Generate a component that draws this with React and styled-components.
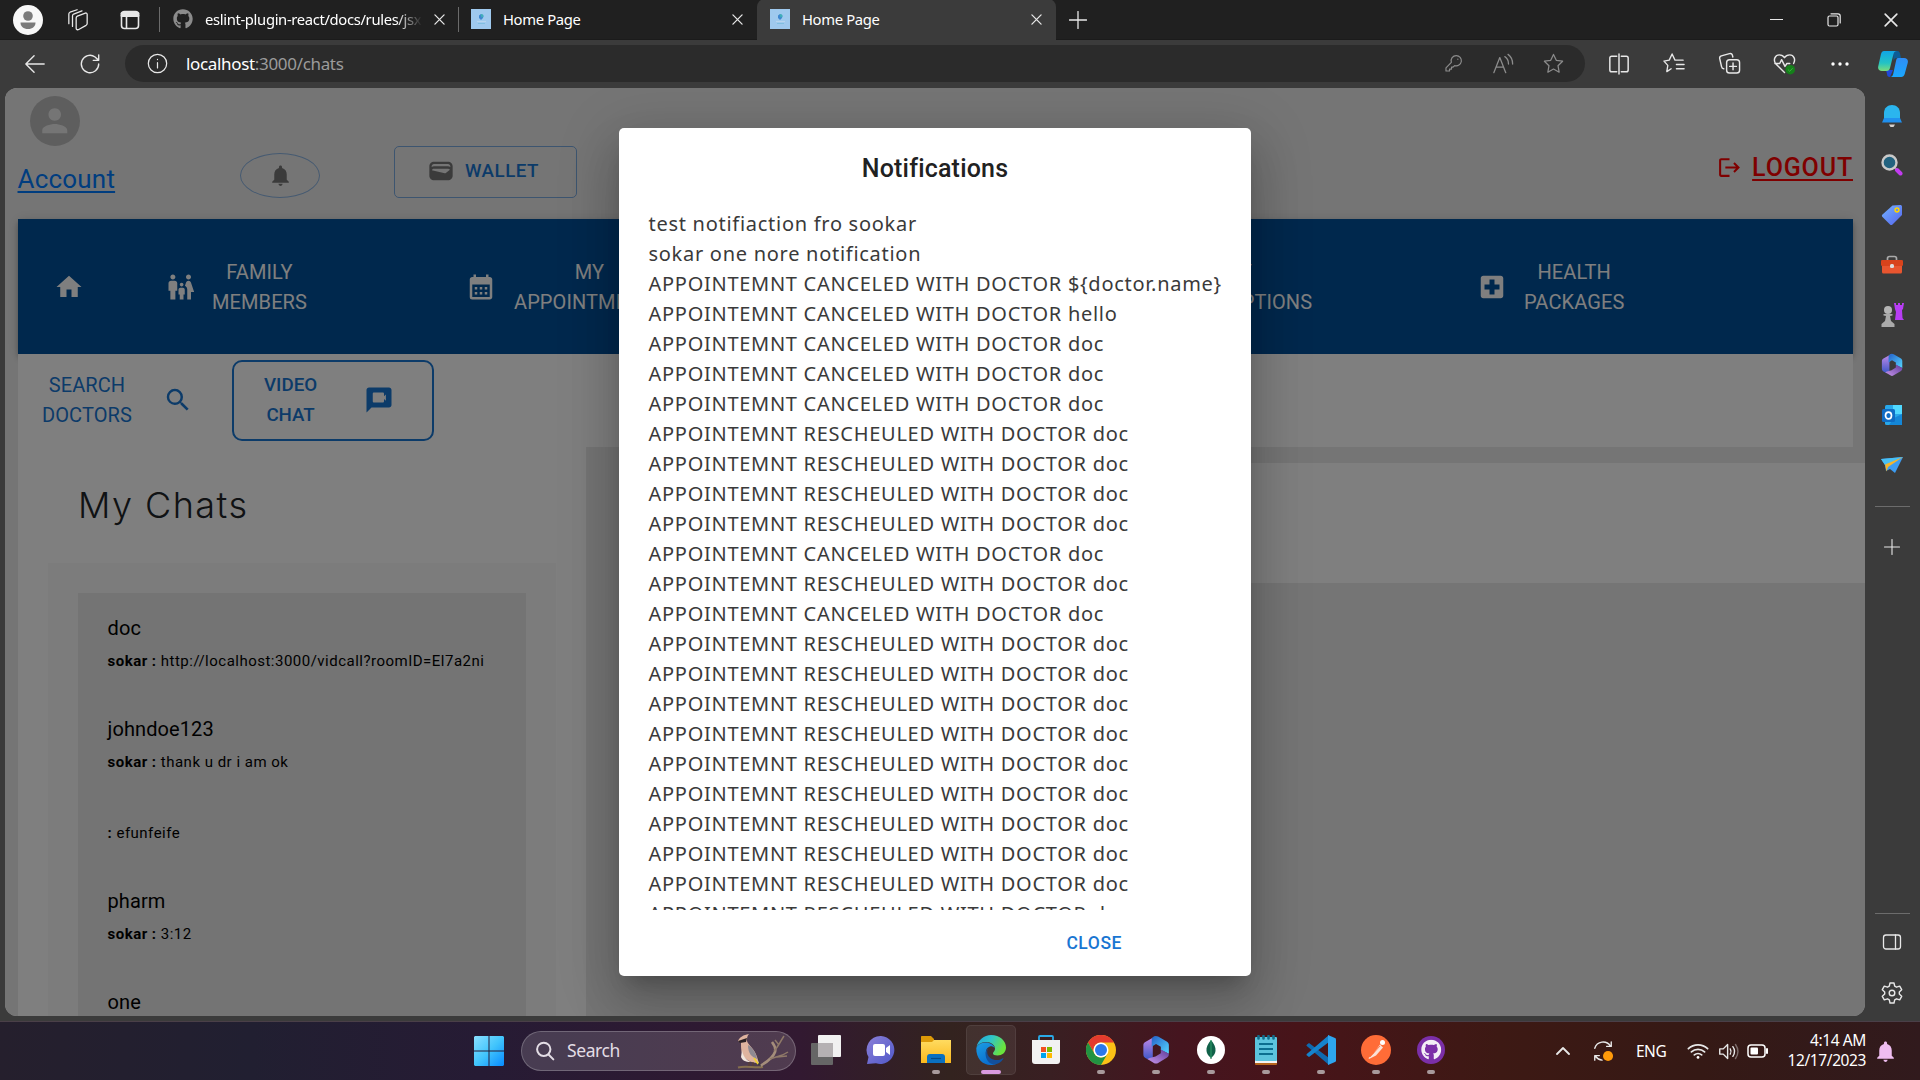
import React from "react";
import styled, { createGlobalStyle } from "styled-components";
import {
  MdPerson, MdNotifications, MdHome, MdFamilyRestroom, MdCalendarMonth,
  MdLocalHospital, MdSearch, MdLogout,
} from "react-icons/md";
import { FaGithub } from "react-icons/fa";

const ui = `"Segoe UI", "Noto Sans", "Open Sans", sans-serif`;
const roboto = `Roboto, "Liberation Sans", sans-serif`;

const Global = createGlobalStyle`
  * { box-sizing: border-box; }
  body { margin: 0; background: #3b3b3b; overflow: hidden; }
  svg { display: block; flex: none; }
`;

const Screen = styled.div`
  width: 1920px; height: 1080px; display: flex; flex-direction: column;
  background: #3b3b3b; overflow: hidden; font-family: ${ui};
`;

/* ---------- browser frame ---------- */
const TabStrip = styled.div`
  height: 40px; flex: none; display: flex; align-items: center; background: #202020; color: #fff;
  border-bottom: 1px solid #1b1b1b;
`;
const Slot = styled.div`
  width: ${(p) => p.$w}px; height: ${(p) => p.$h || 40}px; flex: none;
  display: flex; align-items: center; justify-content: center; color: ${(p) => p.$c || "#e8e8e8"};
`;
const Profile = styled.div`
  width: 30px; height: 30px; border-radius: 50%; background: #f8f8f8; display: flex;
  align-items: center; justify-content: center; margin-left: 13px;
`;
const Tab = styled.div`
  width: ${(p) => p.$w}px; height: 41px; display: flex; align-items: center; flex: none;
  padding: 0 8px 1px ${(p) => p.$pad || 13}px; background: ${(p) => (p.$active ? "#3b3b3b" : "transparent")};
  border-radius: 8px 8px 0 0;
`;
const Divider = styled.div`width: 1px; height: 25px; background: #6b6b6b; flex: none;`;
const TabTitle = styled.div`
  flex: 1; min-width: 0; overflow: hidden; white-space: nowrap; font-size: 14.8px; line-height: 22px;
  letter-spacing: -0.35px; margin: -1px 0 0 12px; color: #fff;
  ${(p) => p.$fade && "mask-image: linear-gradient(90deg, #000 88%, transparent 100%);"}
`;
const Spacer = styled.div`flex: 1;`;

const Toolbar = styled.div`height: 48px; flex: none; display: flex; align-items: center; padding-left: 12px; padding-bottom: 1px;`;
const Address = styled.div`
  width: 1460px; height: 37px; border-radius: 19px; background: #2b2b2b; display: flex; align-items: center;
  margin-left: 3px; padding: 0 7px;
`;
const Url = styled.div`
  flex: 1; font-size: 17px; line-height: 24px; color: #9b9b9b; letter-spacing: -0.33px; padding-left: 4px;
  b { font-weight: 400; color: #fff; }
`;

const Body = styled.div`flex: 1; display: flex; min-height: 0; padding: 0 0 5px 5px;`;
const Rail = styled.div`width: 54px; display: flex; flex-direction: column; align-items: center; padding-top: 3px;`;
const RailLine = styled.div`width: 35px; height: 1px; background: #6c6c6c;`;

/* ---------- web page ---------- */
const Viewport = styled.div`
  width: 1860px; height: 928px; flex: none; border-radius: 12px; overflow: hidden; background: #ebebeb;
  position: relative; font-family: ${roboto};
`;
const Header = styled.header`height: 131px; display: flex; padding: 8px 12px 0 13px;`;
const AccountBox = styled.div`width: 222px;`;
const Avatar = styled.div`
  width: 50px; height: 50px; border-radius: 50%; background: #bdbdbd; color: #ebebeb; margin-left: 12px;
  display: flex; align-items: center; justify-content: center;
`;
const AccountLink = styled.a`
  display: block; margin-top: 15px; font-size: 26px; line-height: 36px; color: #007bff; text-decoration: underline;
  text-decoration-thickness: 2px; text-underline-offset: 3px; letter-spacing: 0.2px; text-indent: -0.5px;
`;
const BellButton = styled.button`
  width: 80px; height: 45px; margin: 57px 74px 0 0; padding: 0; border-radius: 50%; background: none;
  border: 1px solid #8cb4e2; color: #777; display: flex; align-items: center; justify-content: center;
`;
const WalletButton = styled.button`
  width: 183px; height: 52px; margin-top: 50px; border-radius: 5px; border: 1px solid #7aaae0; background: none;
  display: flex; align-items: center; gap: 10px; padding: 0 0 2px 32px; color: #777;
  span { color: #1976d2; font: 500 18.75px/30px ${roboto}; letter-spacing: 0.5px; }
`;
const Logout = styled.a`
  display: flex; align-items: center; gap: 10px; height: 40px; margin-top: 52px; color: #ff0000;
  font-size: 25px; font-weight: 500; letter-spacing: 0.85px; line-height: 36px;
  span { text-decoration: underline; text-decoration-thickness: 2px; text-underline-offset: 3px; }
  svg { margin-top: -2px; }
`;
const Nav = styled.nav`
  height: 135px; margin: 0 12px 0 13px; background: #00509a; color: #fff; display: flex; align-items: center;
  box-shadow: 0 2px 5px -1px rgba(0,0,0,.2), 0 5px 6px rgba(0,0,0,.14), 0 1px 12px rgba(0,0,0,.12);
`;
const NavItem = styled.div`
  display: flex; align-items: center; gap: ${(p) => p.$gap || 16}px; width: ${(p) => p.$w}px;
  padding-left: ${(p) => p.$pad || 0}px; flex: none;
`;
const Caption = styled.div`
  text-align: center; font-size: 20px; line-height: 30px; white-space: pre-line; letter-spacing: 0.1px;
`;
const SubNav = styled.div`
  height: 93px; margin: 0 12px 0 13px; background: #fff; display: flex; color: #1976d2; position: relative;
`;
const SearchDoctors = styled.div`display: flex; gap: 31px; padding: 16px 0 0 24px; width: 214px;
  svg { margin-top: 15px; }
`;
const VideoChat = styled.button`
  width: 202px; height: 81px; margin-top: 6px; border: 2px solid #1976d2; border-radius: 10px; background: none; color: #1976d2;
  display: flex; align-items: center; gap: 47px; padding: 0 0 2px 30px; font: 500 18.75px/30px ${roboto};
  text-align: center; white-space: pre-line;
`;
const Main = styled.div`display: flex; height: 569px;`;
const ChatPane = styled.section`
  width: 568px; margin-left: 13px; background: #fff; padding: 30px 30px 0; display: flex; flex-direction: column;
`;
const ChatTitle = styled.h1`
  margin: 0 0 30px; height: 56px; padding-left: 30px; font: 300 36px/56px Inter, ${roboto}; letter-spacing: 1.45px; color: #212529;
`;
const ChatFrame = styled.div`flex: 1; background: #f8f8f8; padding: 30px 30px 0; min-height: 0;`;
const ChatList = styled.div`background: #e8e8e8; height: 100%; overflow: hidden;`;
const Chat = styled.div`padding: 20px 0 21px 29.5px; color: #000;`;
const ChatName = styled.div`font-size: 20px; line-height: 30px; letter-spacing: 0.1px;`;
const ChatText = styled.div`
  margin-top: 7px; font-size: 15px; line-height: 23px; letter-spacing: 0.49px; white-space: nowrap;
  b { font-weight: 700; }
`;
const Conversation = styled.section`flex: 1; padding: 16px 0 0 60px;`;
const ConversationHead = styled.div`height: 120px; background: #fff;`;

const Backdrop = styled.div`
  position: absolute; inset: 0; background: rgba(0,0,0,.5); display: flex; align-items: center; justify-content: center;
`;
const Dialog = styled.div`
  width: 632px; height: 848px; background: #fff; border-radius: 5px; display: flex; flex-direction: column;
  box-shadow: 0 14px 19px -9px rgba(0,0,0,.2), 0 30px 48px 4px rgba(0,0,0,.14), 0 11px 58px 10px rgba(0,0,0,.12);
`;
const DialogTitle = styled.h2`
  margin: 0; padding: 21px 0 0; height: 81px; text-align: center; font: 500 25px/40px ${roboto}; color: #212121;
  letter-spacing: 0.19px;
`;
const DialogContent = styled.div`height: 701px; overflow: hidden; padding: 0 29.5px;`;
const Line = styled.div`
  font: 400 20px/30px ${ui}; color: #3a3a3a; white-space: nowrap; letter-spacing: 0.72px;
`;
const DialogActions = styled.div`flex: 1; display: flex; justify-content: flex-end; padding: 13px 129px 0 0;`;
const CloseButton = styled.button`
  border: 0; background: none; padding: 0; height: 40px; color: #1976d2; font: 500 17.5px/40px ${roboto}; letter-spacing: 0.55px;
`;

/* ---------- taskbar ---------- */
const Taskbar = styled.footer`
  height: 59px; flex: none; display: flex; align-items: center; color: #fff; border-top: 1px solid #4a3f48;
  background: linear-gradient(90deg, #251f2d 0, #211f31 250px, #261b34 480px, #321931 800px, #33231f 950px, #391f22 1050px,
    #45151f 1180px, #471419 1300px, #3d1914 1500px, #351915 1700px, #311a1d 1920px);
`;
const SearchPill = styled.div`
  width: 275px; height: 40px; margin-left: 2px; border-radius: 20px; border: 1px solid rgba(255,255,255,.22);
  background: rgba(255,255,255,.15); display: flex; align-items: center; padding: 0 5px 0 13px; color: #e3dde5;
  span { flex: 1; margin: -2px 0 0 12px; font-size: 17.5px; letter-spacing: -0.4px; }
`;
const TaskItem = styled.div`
  width: 55px; height: 58px; flex: none; display: flex; flex-direction: column; align-items: center;
`;
const AppTile = styled.div`
  width: 50px; height: 50px; margin-top: 3px; border-radius: 5px; display: flex; flex-direction: column; align-items: center;
  padding-top: ${(p) => (p.$active ? 9 : 10)}px;
  ${(p) => p.$active && "background: rgba(255,255,255,.07); border: 1px solid rgba(255,255,255,.07);"}
`;
const Pill = styled.div`
  width: ${(p) => (p.$active ? 20 : 8)}px; height: 4px; border-radius: 2px; margin-top: 5px; flex: none;
  background: ${(p) => (p.$active ? "#d99be0" : "#a89a9c")};
`;
const Clock = styled.div`width: 88px; text-align: right; font-size: 15.5px; line-height: 20px; letter-spacing: -0.4px; margin: -2px 6px 0 0;`;
const Lang = styled.div`width: 42px; font-size: 15.5px; letter-spacing: -0.5px; margin-top: -1px;`;

/* ---------- drawings ---------- */
const I = ({ s = 24, w, h, vb, children, sw = 1.5, ...r }) => (
  <svg width={w || s} height={h || s} viewBox={vb || "0 0 24 24"} fill="none" stroke="currentColor"
    strokeWidth={sw} strokeLinecap="round" strokeLinejoin="round" {...r}>{children}</svg>
);
const Cross = ({ s = 11 }) => <I s={s} vb="0 0 12 12" sw={1.4}><path d="M1 1l10 10M11 1L1 11" /></I>;
const Favicon = () => (
  <svg width="20" height="20" viewBox="0 0 20 20"><rect width="20" height="20" fill="#9fc9ee" />
    <path d="M8 6.500l2-1.500 2.500 1.500-.5 2.500-2 2-2-2z" fill="#3f87d0" /><path d="M9.500 5l2.500.500.500 2.500-2 .5z" fill="#3fb0b8" />
    <path d="M6 12.500h9" stroke="#b8d6ee" strokeWidth="1.200" /><path d="M7 14.500h7" stroke="#78bcdc" strokeWidth=".8" /></svg>
);
const Wallet = () => (
  <svg width="28" height="28" viewBox="0 0 24 24" fill="currentColor">
    <path d="M18 4H6C3.79 4 2 5.79 2 8v8c0 2.21 1.79 4 4 4h12c2.21 0 4-1.79 4-4V8c0-2.21-1.79-4-4-4zm-1.86 9.77c-.24.2-.57.28-.88.2L4.15 11.25C4.45 10.52 5.16 10 6 10h12c.67 0 1.26.34 1.63.84l-3.49 2.93zM6 6h12c1.1 0 2 .9 2 2v.55C19.41 8.21 18.73 8 18 8H6c-.73 0-1.41.21-2 .55V8c0-1.1.9-2 2-2z" />
  </svg>
);
const VideoIcon = () => (
  <svg width="30" height="30" viewBox="0 0 24 24" fill="currentColor">
    <path fillRule="evenodd" d="M20 2H4c-1.1 0-2 .9-2 2v18l4-4h14c1.100 0 2-.9 2-2V4c0-1.100-.9-2-2-2zM8 6h7c.55 0 1 .45 1 1v1.900L17.500 7.500v5L16 11.100V13c0 .55-.45 1-1 1H8c-.55 0-1-.45-1-1V7c0-.55.45-1 1-1z" />
  </svg>
);
const M365 = ({ s = 28, id }) => (
  <svg width={s} height={s} viewBox="0 0 28 28">
    <defs>
      <linearGradient id={id + "a"} x1="0" y1="0" x2="0" y2="1"><stop stopColor="#c58be8" /><stop offset="1" stopColor="#3a56c8" /></linearGradient>
      <linearGradient id={id + "b"} x1="0" y1="0" x2="1" y2="1"><stop stopColor="#2460c8" /><stop offset="1" stopColor="#55d6ff" /></linearGradient>
      <linearGradient id={id + "c"} x1="0" y1="1" x2="1" y2="0"><stop stopColor="#c996ec" /><stop offset="1" stopColor="#5c3a98" /></linearGradient>
    </defs>
    <path fillRule="evenodd" d="M13 1.500L4 6.500C3 7 2.200 8 2.200 9.500V18c0 2 .8 3 2.300 3.800L8 23.500l3-2V9z" fill={`url(#${id}a)`} />
    <path d="M11.500 1.700c1.500-1 3-1 4.500-.2l8 4.500c1.300.8 2 1.800 2 3.200v8.300l-7.500-3.500V11L14 8.500l-4 2.500V5c0-1.500.3-2.500 1.500-3.300z" fill={`url(#${id}b)`} />
    <path d="M8 21.500l5.500-1.500 5-3v-3.500L26 17.500c0 2-.7 3-2 3.800l-8 4.800c-1.300.8-2.700.8-4 0l-6-3.600z" fill={`url(#${id}c)`} />
  </svg>
);
const Copilot = () => (
  <svg width="30" height="28" viewBox="0 0 30 28">
    <defs>
      <linearGradient id="cpa" x1="0" y1="0" x2="0" y2="1"><stop stopColor="#10a5e8" /><stop offset=".6" stopColor="#23c3c4" /><stop offset="1" stopColor="#7bdc7a" /></linearGradient>
      <linearGradient id="cpb" x1="0" y1="0" x2="0" y2="1"><stop stopColor="#2f8df5" /><stop offset="1" stopColor="#1aa8ff" /></linearGradient>
    </defs>
    <path d="M15 1h4.500c1.500 0 2 1 2.500 2.500L23 8h-4c-2 0-3 1-3.500 3z" fill="#0c5c96" />
    <path d="M8 20h7l-3 7c-2 0-3-1-3-3z" fill="#1f49d8" />
    <path d="M6 1h13c-2 0-3 1-3.500 3L12 18c-.5 2-1.500 3-3.500 3H4c-3 0-4.500-2-3.700-5L3 4c.5-2 1.500-3 3-3z" fill="url(#cpa)" />
    <path d="M20 8h6c3 0 4.500 2 3.700 5l-3 11c-.6 2-1.700 3-3.500 3H12c1.800 0 2.700-1 3.200-3L18 11c.4-2 .8-3 2-3z" fill="url(#cpb)" />
  </svg>
);
const StarPath = "M12 2.500l2.900 6.200 6.600.9-4.800 4.700 1.200 6.800-5.900-3.300-5.900 3.300 1.200-6.800L2.500 9.600l6.600-.9z";

const RailBell = () => (
  <svg width="22" height="24" viewBox="0 0 22 24"><path d="M3 18V9c0-5 3.500-8 8-8s8 3 8 8v9z" fill="#2bb5ee" /><path d="M3 14l-2 4.500h20L19 14z" fill="#2090ee" /><path d="M8 20.500h6L12.500 23h-3z" fill="#d5cfcc" /></svg>
);
const RailSearch = () => (
  <svg width="22" height="22" viewBox="0 0 22 22"><path d="M13.500 13.500l2 2" stroke="#999" strokeWidth="2" /><path d="M16 16l3.500 3.500" stroke="#c23bf0" strokeWidth="4" strokeLinecap="round" /><circle cx="8.500" cy="8.500" r="7" fill="#22627f" stroke="#c9c9c9" strokeWidth="2.400" /></svg>
);
const RailTag = () => (
  <svg width="22" height="22" viewBox="0 0 22 22"><defs><linearGradient id="tg" x1="0" y1="0" x2="1" y2="1"><stop stopColor="#73b4ff" /><stop offset="1" stopColor="#5563ee" /></linearGradient></defs>
    <path d="M11.500 1.500L19 1c1.400 0 2 .6 2 2v8l-9.500 9.500c-.8.8-1.700.8-2.500 0L1.500 13c-.8-.8-.8-1.700 0-2.500z" fill="url(#tg)" /><circle cx="16" cy="6" r="1.900" fill="none" stroke="#ffd400" strokeWidth="1.500" /></svg>
);
const RailBox = () => (
  <svg width="24" height="20" viewBox="0 0 24 20"><path d="M7.500 6V3.500C7.500 2 8 1.500 9.500 1.500h5c1.500 0 2 .5 2 2V6" fill="none" stroke="#aaa" strokeWidth="1.700" /><rect x="2" y="9" width="20" height="9.500" rx="1.500" fill="#e8552f" /><rect x="1" y="5" width="22" height="6" rx="1.200" fill="#d8431c" /><rect x="10" y="9" width="4" height="4" rx="1.500" fill="#ddd" /></svg>
);
const RailChess = () => (
  <svg width="24" height="26" viewBox="0 0 24 26"><path d="M14 1h2v2h2V1h2v2h2V1h2l-1 6-1 1 .5 8 1.500 2h-9l1-8-1-3z" fill="#b83df5" /><circle cx="8" cy="8" r="4" fill="#b5b5b5" /><path d="M3.500 12h9v1.500l-2.500.5 1 5 3.500 3v3H1.500v-3l3.500-3 1-5-2.500-.5z" fill="#aaa" /></svg>
);
const RailOutlook = () => (
  <svg width="22" height="22" viewBox="0 0 22 22"><rect x="4" y="1" width="17" height="20" rx="1.500" fill="#28a8ea" /><rect x="12" y="1" width="9" height="9" fill="#50d9ff" /><path d="M13 14l8-4v11H8z" fill="#1487d8" /><rect x="1" y="5" width="13" height="13" rx="1.500" fill="#0f6cc4" /><ellipse cx="7.500" cy="11.500" rx="3" ry="3.400" fill="none" stroke="#fff" strokeWidth="1.700" /></svg>
);
const RailPlane = () => (
  <svg width="22" height="18" viewBox="0 0 22 18"><path d="M0 3l22-2-8 16-5-4-4 2-1-6z" fill="#3c9cf2" /><path d="M0 3l22-2L4 9z" fill="#48c0f5" /><path d="M4 8.500L22 1 7 11l-1.500 4.500z" fill="#f5b52a" /></svg>
);
const Start = () => (
  <svg width="30" height="30" viewBox="0 0 30 30"><defs><linearGradient id="wn" gradientUnits="userSpaceOnUse" x1="0" y1="0" x2="30" y2="30"><stop stopColor="#8be0ff" /><stop offset=".5" stopColor="#42c5fc" /><stop offset="1" stopColor="#078bff" /></linearGradient></defs>
    <path d="M1 0h13.500v14.500H0V1zM15.500 0H29l1 1v13.500H15.500zM0 15.500h14.500V30H1l-1-1zM15.500 15.500H30V29l-1 1H15.500z" fill="url(#wn)" /></svg>
);
const Bird = () => (
  <svg width="54" height="36" viewBox="0 0 54 36">
    <path d="M2 34.500c9-2.500 16 1 25-.5" fill="none" stroke="#86704e" strokeWidth="2" />
    <path d="M24 33c7-4 13-8 15-14 1-3 0-6-3-10" fill="none" stroke="#a48d7a" strokeWidth="2.600" />
    <path d="M38 18c4-4 6-9 10-15M34 26c6-3 11-2 18-7M41 24l10-1M43 12l-4-5" fill="none" stroke="#8f7968" strokeWidth="1.500" />
    <path d="M18 28l7 6-2-9z" fill="#3e3a40" />
    <path d="M2 8c2-4 5-6 11-7-2 2-2 4-2 7 1 4 8 8 10 16l2 6c-5 0-10-1-14-5C5 21 5 15 5 10z" fill="#dfb49f" />
    <path d="M12 12c5 3 8 8 9 14-5-2-9-5-9-14z" fill="#8f8a92" /><path d="M18 25l4 6" stroke="#efd12c" strokeWidth="1.600" />
    <path d="M2 8l9-3-1 4-6 1z" fill="#2a2125" /><path d="M6 17c1 6 4 10 9 12-6 0-9-2-10-5z" fill="#f2e6dd" />
    <path d="M13 29v4M17 29v4" stroke="#5b4033" strokeWidth="1.200" />
  </svg>
);
const TaskView = () => (
  <svg width="30" height="30" viewBox="0 0 30 30"><rect x="0" y="8" width="22" height="22" rx="1" fill="#666" /><rect x="7" y="0" width="23" height="22" rx="1" fill="#f1f1f1" /><rect x="7" y="8" width="15" height="14" fill="#b5b1b3" /></svg>
);
const ChatApp = () => (
  <svg width="30" height="30" viewBox="0 0 30 30"><defs><linearGradient id="ch" x1="0" y1="0" x2="1" y2="1"><stop stopColor="#8b80d8" /><stop offset="1" stopColor="#5058c9" /></linearGradient></defs>
    <path d="M15 1a14 14 0 1 1-5 27.300L1 29l1.500-7A14 14 0 0 1 15 1z" fill="url(#ch)" /><rect x="7" y="9" width="12" height="12" rx="2" fill="#fff" /><path d="M20 13l4-3v10l-4-3z" fill="#fff" /></svg>
);
const Folder = () => (
  <svg width="30" height="30" viewBox="0 0 30 30"><defs><linearGradient id="fo" x1="0" y1="0" x2="0" y2="1"><stop stopColor="#ffdb60" /><stop offset="1" stopColor="#fbb81c" /></linearGradient></defs>
    <path d="M0 2c0-.6.400-1 1-1h9l3 3v5H0z" fill="#dd9a08" /><path d="M0 7h11l2-2h17v23H0z" fill="url(#fo)" /><path d="M6 28v-6c0-2 1-3 3-3h12c2 0 3 1 3 3v6z" fill="#0a70c0" /><path d="M10 23.500h10" stroke="#064a86" strokeWidth="1.200" /></svg>
);
const Edge = () => (
  <svg width="30" height="30" viewBox="0 0 30 30"><defs>
    <linearGradient id="e1" x1="0" y1="0" x2="1" y2=".4"><stop stopColor="#22a3de" /><stop offset=".5" stopColor="#30c5c8" /><stop offset="1" stopColor="#6ae33d" /></linearGradient>
    <linearGradient id="e2" x1="0" y1="0" x2=".5" y2="1"><stop stopColor="#1b9de2" /><stop offset="1" stopColor="#0a6fd0" /></linearGradient></defs>
    <path d="M.5 12C2 5 8 0 15 0c9 0 15 6 15 12.500 0 5-4 8-8.500 8-3 0-4.500-1-4.500-2 0-1.500 2-2 2-5C19 10 15 7 10.500 7 6 7 2 9 .5 12z" fill="url(#e1)" />
    <path d="M.3 13C2 9 6 7.500 9.500 7.500c5 0 8.500 2.500 9.300 5.500-1.500-1.500-3.500-2-5-1.500C10 13 9 17 10.500 21c1.500 4.500 5 7.500 9.500 8-1.500.7-3.500 1-5 1C6.500 30 0 23.500.300 13z" fill="url(#e2)" />
    <path d="M12.300 13c-2 3-1.300 7.500 2 10 4 3 9 2.500 12.500.2.500-.2.900.1.600.6C25 27.500 21.500 29.500 18 29.500c-7-.5-11.500-11.500-5.700-16.500z" fill="#12509c" /></svg>
);
const Store = () => (
  <svg width="30" height="30" viewBox="0 0 30 30"><path d="M8 6V2c0-.6.400-1 1-1h12c.6 0 1 .4 1 1v4" fill="none" stroke="#2aaae8" strokeWidth="1.800" /><path d="M1 5h28v21c0 2-1 3-3 3H4c-2 0-3-1-3-3z" fill="#f2f2f2" />
    <path d="M10 12h5v5h-5z" fill="#f25022" /><path d="M16 12h5v5h-5z" fill="#7fba00" /><path d="M10 18h5v5h-5z" fill="#00a4ef" /><path d="M16 18h5v5h-5z" fill="#ffb900" /></svg>
);
const Chrome = () => (
  <svg width="30" height="30" viewBox="0 0 30 30"><circle cx="15" cy="15" r="15" fill="#fbc116" /><path d="M2 7.500A15 15 0 0 1 28 7.500H15a7.500 7.500 0 0 0-6.500 11.300z" fill="#e33b2e" /><path d="M2 7.500l6.500 11.300A7.500 7.500 0 0 0 21.500 18.800L15 30A15 15 0 0 1 2 7.500z" fill="#229342" /><circle cx="15" cy="15" r="7.500" fill="#fff" /><circle cx="15" cy="15" r="6" fill="#2b78ea" /></svg>
);
const Mongo = () => (
  <svg width="30" height="30" viewBox="0 0 30 30"><circle cx="15" cy="15" r="14" fill="#fff" /><path d="M15 5c3 4 5 7 4.500 11-.3 3-2 5-4 6.500V24h-1v-1.500c-2-1.500-3.700-3.500-4-6.500C10 12 12 9 15 5z" fill="#116149" /><path d="M15 5v18" stroke="#2f9e68" strokeWidth="1" /></svg>
);
const Notepad = () => (
  <svg width="30" height="30" viewBox="0 0 30 30"><rect x="4" y="24" width="22" height="6" rx="1" fill="#b5651d" /><rect x="4" y="24" width="22" height="4" fill="#f3f3f3" /><rect x="4" y="2" width="22" height="24" rx="1" fill="#5cc4dd" />
    <path d="M7.500 1v2.500M12.500 1v2.500M17.500 1v2.500M22.500 1v2.500" stroke="#126d8c" strokeWidth="2.600" strokeLinecap="round" /><path d="M8 9h14M8 14h14M8 19h14" stroke="#0c6f90" strokeWidth="1.800" /></svg>
);
const VSCode = () => (
  <svg width="30" height="30" viewBox="0 0 30 30"><path d="M1 9.500l2-1.500L23 23v7L.800 11c-.5-.5-.5-1 .2-1.500z" fill="#0f6ab0" /><path d="M1 20.500l2 1.500L23 7V0L.8 19c-.5.5-.5 1 .2 1.500z" fill="#1683cc" /><path d="M22 0l7 3c.6.3 1 .8 1 1.500v21c0 .7-.4 1.200-1 1.500l-7 3z" fill="#2ea5ee" /></svg>
);
const Postman = () => (
  <svg width="30" height="30" viewBox="0 0 30 30"><circle cx="15" cy="15" r="15" fill="#ff6c37" /><circle cx="21.500" cy="7.500" r="2.500" fill="#fff" /><path d="M19 9.500l3 3-7 8-7 3.500-.500-1 5-4.500z" fill="#fbe0d6" /><path d="M9 22l10-11" stroke="#ff6c37" strokeWidth=".8" /></svg>
);
const GitHubApp = () => (
  <svg width="30" height="30" viewBox="0 0 30 30"><circle cx="15" cy="15" r="14" fill="#7b2fa8" /><g transform="translate(5 4.500)"><FaGithub size={20.500} color="#f3eef6" /></g></svg>
);

const apps = [
  [TaskView, false], [ChatApp, false], [Folder, true], [Edge, true, true], [Store, false], [Chrome, true],
  [() => <M365 s={30} id="t" />, true], [Mongo, true], [Notepad, true], [VSCode, true], [Postman, true], [GitHubApp, true],
];
const chats = [
  ["doc", "sokar :", "http://localhost:3000/vidcall?roomID=El7a2ni"],
  ["johndoe123", "sokar :", "thank u dr i am ok"],
  ["", ":", "efunfeife"],
  ["pharm", "sokar :", "3:12"],
  ["one", "", ""],
];
const canceled = "APPOINTEMNT CANCELED WITH DOCTOR ";
const moved = "APPOINTEMNT RESCHEULED WITH DOCTOR ";
const notes = [
  "test notifiaction fro sookar", "sokar one nore notification", canceled + "${doctor.name}", canceled + "hello",
  ...[0, 0, 0, 1, 1, 1, 1, 0, 1, 0, 1, 1, 1, 1, 1, 1, 1, 1, 1, 1].map((k) => (k ? moved : canceled) + "doc"),
];
const rail = [RailBell, RailSearch, RailTag, RailBox, RailChess, () => <M365 s={24} id="r" />, RailOutlook, RailPlane];

export default function App() {
  return (
    <Screen>
      <Global />
      <TabStrip>
        <Profile>
          <svg width="20" height="20" viewBox="0 0 20 20" fill="#7b7b7b"><circle cx="10" cy="6" r="4.800" /><path d="M2.500 12.500h15c0 4-3 6.500-7.500 6.500s-7.500-2.500-7.500-6.500z" /></svg>
        </Profile>
        <Slot $w={69}><I s={22} sw={1.4}><path d="M10 9.800c0-1 .4-1.600 1.300-2L20 4.500c1-.4 2 .2 2 1.300v10c0 1-.4 1.500-1.200 2l-8 4.500c-1.300.7-2.800.2-2.800-1.300zM6 19V7.500c0-1 .5-1.600 1.300-2l9-3.500M2 16V5.500c0-1 .5-1.600 1.300-2L11 .8" /></I></Slot>
        <Slot $w={36}><I s={20} vb="0 0 20 20" sw={1.600}><rect x="1.500" y="1.500" width="17" height="17" rx="3" /><path d="M2 3.500h16M2 5.500h16" strokeWidth="3" /><path d="M6.500 6v12" /></I></Slot>
        <Slot $w={11} />
        <Divider />
        <Tab $w={298}>
          <FaGithub size={20} color="#8b8b8b" />
          <TabTitle $fade>eslint-plugin-react/docs/rules/jsx-key.md</TabTitle>
          <Slot $w={10} /><Slot $w={14}><Cross /></Slot><Slot $w={4} />
        </Tab>
        <Divider />
        <Tab $w={298} $pad={12}>
          <Favicon /><TabTitle>Home Page</TabTitle><Slot $w={23}><Cross /></Slot>
        </Tab>
        <Tab $w={299} $active>
          <Favicon /><TabTitle>Home Page</TabTitle><Slot $w={23}><Cross /></Slot>
        </Tab>
        <Slot $w={44}><I s={18} vb="0 0 18 18" sw={1.300}><path d="M9 .500v17M.5 9h17" /></I></Slot>
        <Spacer />
        <Slot $w={57}><I s={13} vb="0 0 13 13" sw={1.200}><path d="M0 6.500h13" /></I></Slot>
        <Slot $w={57}><I s={14} vb="0 0 14 14" sw={1.200}><rect x="1" y="3" width="10" height="10" rx="1.500" /><path d="M4 .800h7c1.300 0 2.200.9 2.200 2.200v7" /></I></Slot>
        <Slot $w={58}><Cross s={14} /></Slot>
      </TabStrip>

      <Toolbar>
        <Slot $w={46}><I s={22}><path d="M22 12H2M11 3L2 12l9 9" /></I></Slot>
        <Slot $w={64}><I s={22}><path d="M21.500 12A9.500 9.500 0 1 1 17.500 4.300L21 7.500M21.500 2v6h-6" /></I></Slot>
        <Address>
          <Slot $w={50}><I s={21} sw={1.400}><circle cx="12" cy="12" r="10.500" /><path d="M12 11v6M12 7.300v.2" /></I></Slot>
          <Url><b>localhost</b>:3000/chats</Url>
          <Slot $w={50} $c="#8c8c8c"><I s={19} sw={1.500}><path d="M15.500 2a6.500 6.500 0 1 1-2 12.700L11.500 16.500H9.500v2.500H7v2.500H2.500v-4L9.300 10.500A6.500 6.500 0 0 1 15.500 2zM17.500 6.500v.2" /></I></Slot>
          <Slot $w={50} $c="#8c8c8c"><I s={22} sw={1.400}><path d="M2 21.500L8.500 5 15 21.500M4.500 15.500h8M14 4c2.500 1.500 4 4.500 4 8M17.500 1.500c3.500 2.500 5 6 5 10.500" /></I></Slot>
          <Slot $w={50} $c="#8c8c8c"><I s={23} sw={1.300}><path d={StarPath} /></I></Slot>
        </Address>
        <Slot $w={6} />
        <Slot $w={55}><I s={22} sw={1.600}><path d="M9.500 3.500H4C2.700 3.500 2 4.300 2 5.500v13c0 1.200.7 2 2 2h5.500M14.500 3.500H20c1.300 0 2 .8 2 2v13c0 1.200-.7 2-2 2h-5.500M12 1v22" /></I></Slot>
        <Slot $w={56}><I s={23} sw={1.400}><path d="M8.500 17.500l-4.500 3 1-6.500L1 9.500l5.500-1L9.500 2l3 6.500H21M14 13h8M14 17.500h8" /></I></Slot>
        <Slot $w={55}><I s={23} sw={1.500}><rect x="9" y="8" width="13.500" height="14" rx="3" /><path d="M15.700 11.500v7M12.200 15h7M6 17.500C4.800 17.300 4 16.500 3.700 15.200L1.800 7C1.500 5.500 2 4.500 3.500 4L12 1.700c1.500-.4 2.500.1 3 1.500l.5 2" /></I></Slot>
        <Slot $w={55}><I s={23} sw={1.500}><path d="M12 21.500L2.500 12C0 7.500 2.500 3 6.500 3 9 3 11 4.300 12 6c1-1.700 3-3 5.500-3 4 0 6.500 4.500 4 9M2 12h5l2-4 3.500 7 2-3h3" /><circle cx="18" cy="18.500" r="5" fill="#15801a" stroke="none" /><path d="M16 18.700l1.500 1.500 2.700-3" stroke="#3fae3f" strokeWidth="1" /></I></Slot>
        <Slot $w={55}><svg width="18" height="4" viewBox="0 0 18 4" fill="#fff"><circle cx="2" cy="2" r="1.700" /><circle cx="9" cy="2" r="1.700" /><circle cx="16" cy="2" r="1.700" /></svg></Slot>
        <Slot $w={51}><Copilot /></Slot>
      </Toolbar>

      <Body>
        <Viewport>
          <Header>
            <AccountBox>
              <Avatar><MdPerson size={37.5} /></Avatar>
              <AccountLink>Account</AccountLink>
            </AccountBox>
            <BellButton><MdNotifications size={25} /></BellButton>
            <WalletButton><Wallet /><span>WALLET</span></WalletButton>
            <Spacer />
            <Logout><MdLogout size={25} /><span>LOGOUT</span></Logout>
          </Header>
          <Nav>
            <NavItem $w={148} $pad={36}><MdHome size={30} /></NavItem>
            <NavItem $w={300}><MdFamilyRestroom size={30} /><Caption>{"FAMILY\nMEMBERS"}</Caption></NavItem>
            <NavItem $w={650} $gap={18}><MdCalendarMonth size={30} /><Caption>{"MY\nAPPOINTMENTS"}</Caption></NavItem>
            <NavItem $w={361}><MdLocalHospital size={30} /><Caption>{"MY\nPRESCRIPTIONS"}</Caption></NavItem>
            <NavItem $w={200} $gap={17}><MdLocalHospital size={30} /><Caption>{"HEALTH\nPACKAGES"}</Caption></NavItem>
          </Nav>
          <SubNav>
            <SearchDoctors><Caption>{"SEARCH\nDOCTORS"}</Caption><MdSearch size={30} /></SearchDoctors>
            <VideoChat><span>{"VIDEO\nCHAT"}</span><VideoIcon /></VideoChat>
          </SubNav>
          <Main>
            <ChatPane>
              <ChatTitle>My Chats</ChatTitle>
              <ChatFrame>
                <ChatList>
                  {chats.map(([name, who, text], i) => (
                    <Chat key={i}>
                      {name && <ChatName>{name}</ChatName>}
                      {who && <ChatText><b>{who} </b>{text}</ChatText>}
                    </Chat>
                  ))}
                </ChatList>
              </ChatFrame>
            </ChatPane>
            <Conversation><ConversationHead /></Conversation>
          </Main>
          <Backdrop>
            <Dialog>
              <DialogTitle>Notifications</DialogTitle>
              <DialogContent>{notes.map((n, i) => <Line key={i}>{n}</Line>)}</DialogContent>
              <DialogActions><CloseButton>CLOSE</CloseButton></DialogActions>
            </Dialog>
          </Backdrop>
        </Viewport>
        <Rail>
          {rail.map((R, i) => <Slot key={i} $w={50} $h={i === 0 ? 49 : 50}><R /></Slot>)}
          <Slot $w={50} $h={32}><RailLine /></Slot>
          <Slot $w={50} $h={50}><I s={16} vb="0 0 16 16" sw={1.100}><path d="M8 .500v15M.5 8h15" /></I></Slot>
          <Spacer />
          <RailLine />
          <Slot $w={50} $h={56}><I s={20} vb="0 0 20 20" sw={1.300}><rect x="1.500" y="3" width="17" height="14" rx="2.500" /><path d="M13.500 3v14" /></I></Slot>
          <Slot $w={50} $h={46}><I s={24} sw={1.400}><circle cx="12" cy="12" r="2.800" /><path d="M10 2h4l.7 3.200 1.800 1 3.200-1 2 3.500-2.400 2.200v2.200l2.400 2.200-2 3.500-3.200-1-1.800 1L14 22h-4l-.7-3.200-1.800-1-3.200 1-2-3.500 2.400-2.200v-2.200L2.300 8.700l2-3.500 3.200 1 1.800-1z" /></I></Slot>
        </Rail>
      </Body>

      <Taskbar>
        <Slot $w={474} />
        <Start />
        <Slot $w={15} />
        <SearchPill>
          <I s={20} sw={2.400}><circle cx="10.500" cy="10" r="8" /><path d="M16.500 16.500L22 22" /></I>
          <span>Search</span><Bird />
        </SearchPill>
        <Slot $w={2} />
        {apps.map(([A, dot, active], i) => (
          <TaskItem key={i}><AppTile $active={active}><A />{dot && <Pill $active={active} />}</AppTile></TaskItem>
        ))}
        <Spacer />
        <Slot $w={46}><I s={14} vb="0 0 14 14" sw={1.800}><path d="M1 10l6-6 6 6" /></I></Slot>
        <Slot $w={34}><I s={22} sw={1.500}><path d="M3 9a9.500 9.500 0 0 1 17-2.500M21 2v5h-5M3 22v-5h5M4 18a9.500 9.500 0 0 0 7 4" /><circle cx="17.500" cy="17.500" r="5.500" fill="#ff9a0a" stroke="none" /></I></Slot>
        <Slot $w={16} />
        <Lang>ENG</Lang>
        <Slot $w={40}><I s={22} sw={1.900}><path d="M1.500 9.500a15 15 0 0 1 21 0M4.800 13a10.500 10.500 0 0 1 14.400 0M8 16.300a6 6 0 0 1 8 0" /><circle cx="12" cy="19" r="1.500" fill="#fff" stroke="none" /></I></Slot>
        <Slot $w={20}><I s={21} sw={1.600}><path d="M2 9h4l5-5v16l-5-5H2zM14 9c1.200 2 1.200 4 0 6M17 6.500c2.500 3.500 2.500 7.500 0 11" /><path d="M20 4c3.500 5 3.500 11 0 16" opacity=".4" /></I></Slot>
        <Slot $w={40}><svg width="22" height="16" viewBox="0 0 22 16"><rect x="1" y="2" width="17" height="12" rx="3" fill="none" stroke="#fff" strokeWidth="1.500" /><rect x="3.500" y="4.500" width="7.500" height="7" rx="1" fill="#fff" /><path d="M20 6v4" stroke="#fff" strokeWidth="2" strokeLinecap="round" /></svg></Slot>
        <Clock>4:14 AM<br />12/17/2023</Clock>
        <Slot $w={26} $c="#efbdf0"><MdNotifications size={25} /></Slot>
        <Slot $w={22} />
      </Taskbar>
    </Screen>
  );
}
